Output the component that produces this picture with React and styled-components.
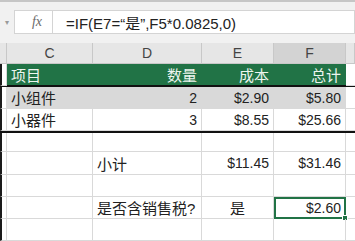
import React from "react";
import styled, { createGlobalStyle } from "styled-components";

const GlobalStyle = createGlobalStyle`
  html, body { margin: 0; padding: 0; background: #fff; overflow: hidden; }
  * { box-sizing: border-box; }
`;

const GREEN = "#217346";
const GRID = "#d9d9d9";
const COLS = "7px 86px 109px 72px 72px 9px";

const Page = styled.div`
  width: 355px;
  height: 241px;
  background: #f1f1f1;
  font-family: "Liberation Sans", "Noto Sans CJK SC", sans-serif;
  overflow: hidden;
  display: flex;
  flex-direction: column;
`;

const TopStrip = styled.div`
  height: 10px;
  border-top: 2px solid #c6c6c6;
`;

const FormulaBar = styled.div`
  height: 26px;
  display: flex;
  align-items: stretch;
`;

const NameStub = styled.div`
  width: 14px;
  display: flex;
  align-items: center;
  justify-content: center;
  color: #9a9a9a;
  font-size: 8px;
`;

const FxBox = styled.div`
  width: 38px;
  background: #fff;
  border: 1px solid #d4d4d4;
  border-right: none;
  display: flex;
  align-items: center;
  justify-content: flex-end;
  padding-right: 10px;
  font-family: "Liberation Serif", serif;
  font-style: italic;
  font-size: 14px;
  color: #6b6b6b;
`;

const FormulaInput = styled.div`
  flex: 1;
  background: #fff;
  border: 1px solid #d4d4d4;
  display: flex;
  align-items: center;
  padding-left: 13px;
  font-size: 15px;
  color: #222;
  white-space: nowrap;
`;

const Gap = styled.div`
  height: 9px;
`;

const Row = styled.div`
  display: grid;
  grid-template-columns: ${COLS};
  height: ${(p) => p.$h}px;
  background: ${(p) => p.$bg || "#fff"};
  border-bottom: ${(p) => (p.$thick ? "2px solid #111" : "none")};
`;

const HeadCell = styled.div`
  background: ${(p) => (p.$active ? "#d3d3d3" : "#e6e6e6")};
  border-right: 1px solid #c8c8c8;
  border-bottom: 1px solid #c8c8c8;
  color: #444;
  font-size: 14px;
  display: flex;
  align-items: center;
  justify-content: center;
`;

const Stub = styled.div`
  background: #fff;
  border-left: 2px solid #1b1b1b;
  border-right: 1px solid ${GRID};
  border-bottom: 1px solid ${GRID};
`;

const Cell = styled.div`
  position: relative;
  display: flex;
  align-items: center;
  justify-content: ${(p) => (p.$right ? "flex-end" : p.$center ? "center" : "flex-start")};
  padding: 0 4px;
  font-size: ${(p) => (p.$num ? 14 : 15)}px;
  color: ${(p) => (p.$light ? "#eef5ef" : "#222")};
  border-right: 1px solid ${(p) => (p.$fill ? "transparent" : GRID)};
  border-bottom: 1px solid ${(p) => (p.$fill ? "transparent" : GRID)};
  white-space: nowrap;
  ${(p) => p.$selected && `outline: 2px solid ${GREEN}; outline-offset: -2px;`}
`;

const FillHandle = styled.span`
  position: absolute;
  right: -3px;
  bottom: -3px;
  width: 6px;
  height: 6px;
  background: ${GREEN};
  border: 1px solid #fff;
`;

const Edge = styled.div`
  border-bottom: 1px solid ${GRID};
  background: #fff;
`;

function DataRow({ h, bg, thick, fill, light, cells }) {
  return (
    <Row $h={h} $bg={bg} $thick={thick}>
      <Stub />
      {cells.map((c, i) => (
        <Cell
          key={i}
          $fill={fill}
          $light={light}
          $right={c.right}
          $center={c.center}
          $num={c.num}
          $selected={c.selected}
        >
          {c.text}
          {c.selected && <FillHandle />}
        </Cell>
      ))}
      <Edge />
    </Row>
  );
}

const blank = [{}, {}, {}, {}];

export default function App() {
  return (
    <>
      <GlobalStyle />
      <Page>
        <TopStrip />
        <FormulaBar>
          <NameStub>▾</NameStub>
          <FxBox>fx</FxBox>
          <FormulaInput>=IF(E7=“是”,F5*0.0825,0)</FormulaInput>
        </FormulaBar>
        <Gap />
        <Row $h={22}>
          <HeadCell />
          <HeadCell>C</HeadCell>
          <HeadCell>D</HeadCell>
          <HeadCell>E</HeadCell>
          <HeadCell $active>F</HeadCell>
          <HeadCell />
        </Row>
        <DataRow
          h={23}
          bg={GREEN}
          thick
          fill
          light
          cells={[
            { text: "项目" },
            { text: "数量", right: true },
            { text: "成本", right: true },
            { text: "总计", right: true },
          ]}
        />
        <DataRow
          h={22}
          bg="#d9d9d9"
          fill
          cells={[
            { text: "小组件" },
            { text: "2", right: true, num: true },
            { text: "$2.90", right: true, num: true },
            { text: "$5.80", right: true, num: true },
          ]}
        />
        <DataRow
          h={24}
          thick
          cells={[
            { text: "小器件" },
            { text: "3", right: true, num: true },
            { text: "$8.55", right: true, num: true },
            { text: "$25.66", right: true, num: true },
          ]}
        />
        <DataRow h={20} cells={blank} />
        <DataRow
          h={24}
          cells={[
            {},
            { text: "小计" },
            { text: "$11.45", right: true, num: true },
            { text: "$31.46", right: true, num: true },
          ]}
        />
        <DataRow h={23} cells={blank} />
        <DataRow
          h={23}
          cells={[
            {},
            { text: "是否含销售税?" },
            { text: "是", center: true },
            { text: "$2.60", right: true, num: true, selected: true },
          ]}
        />
        <DataRow h={23} cells={blank} />
      </Page>
    </>
  );
}
